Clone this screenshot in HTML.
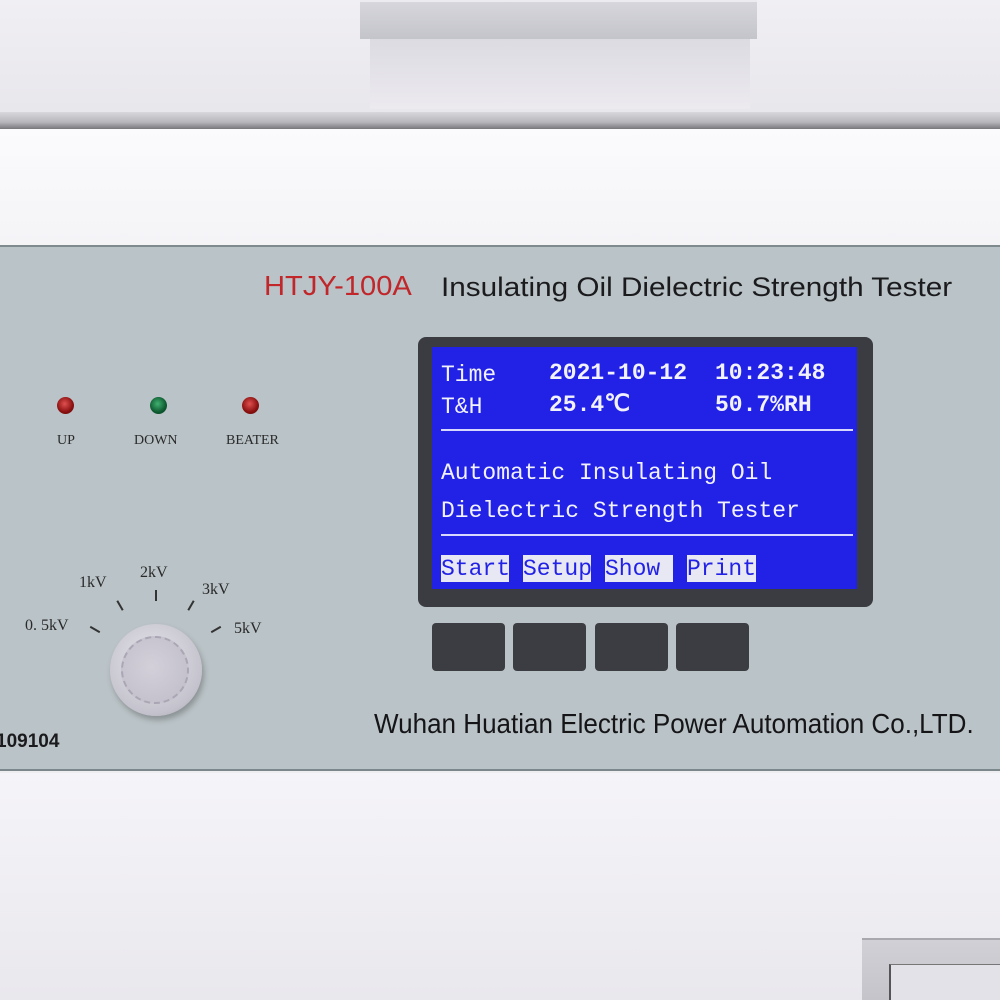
<!DOCTYPE html>
<html><head><meta charset="utf-8"><style>
*{margin:0;padding:0;box-sizing:border-box}
body{width:1000px;height:1000px;overflow:hidden;position:relative;background:#eeeef1;font-family:"Liberation Sans",sans-serif}
.a{position:absolute}
.lcd{font-family:"Liberation Mono",monospace;color:#f2f2ff;font-size:23px;white-space:pre;line-height:1}
.b{font-weight:bold}
.sm{font-family:"Liberation Serif",serif;font-size:14px;color:#2a2a2a}
.btn{position:absolute;top:623px;height:48px;width:73px;background:#3c3d42;border-radius:4px}
.led{position:absolute;width:17px;height:17px;border-radius:50%}
.tick{position:absolute;width:2px;height:11px;background:#333}
</style></head><body>
<div class="a" style="left:0;top:0;width:1000px;height:112px;background:linear-gradient(#f0eff3,#e8e7ec)"></div>
<div class="a" style="left:360px;top:0;width:397px;height:39px;background:linear-gradient(#d6d6dc,#c4c4cb);border-top:2px solid #ececf0"></div>
<div class="a" style="left:370px;top:39px;width:380px;height:70px;background:linear-gradient(#dcdbe2,#eceaef)"></div>
<div class="a" style="left:0;top:112px;width:1000px;height:17px;background:linear-gradient(#d8d8dc,#b6b6bb 60%,#77777c)"></div>
<div class="a" style="left:0;top:129px;width:1000px;height:116px;background:linear-gradient(#fbfbfd,#f4f4f7)"></div>
<div class="a" style="left:0;top:245px;width:1000px;height:526px;background:#bac3c7;border-top:2px solid #7f8a8e;border-bottom:2px solid #7c878b"></div>
<div class="a" style="left:264px;top:270px;font-size:28px;color:#c0262a;transform:scaleX(1.04);transform-origin:left;white-space:nowrap">HTJY-100A</div>
<div class="a" style="left:441px;top:272px;font-size:27px;color:#1b1b1e;transform:scaleX(1.1);transform-origin:left;white-space:nowrap">Insulating Oil Dielectric Strength Tester</div>
<div class="a" style="left:374px;top:708px;font-size:28px;color:#151518;transform:scaleX(.93);transform-origin:left;white-space:nowrap">Wuhan Huatian Electric Power Automation Co.,LTD.</div>
<div class="a" style="left:-4px;top:731px;font-size:19px;font-weight:bold;color:#1b1b1e">109104</div>
<div class="led" style="left:57px;top:397px;background:radial-gradient(circle at 45% 40%,#e05050,#8a1010 60%,#5a0808)"></div>
<div class="led" style="left:150px;top:397px;background:radial-gradient(circle at 45% 40%,#40b070,#0e5a30 60%,#083a20)"></div>
<div class="led" style="left:242px;top:397px;background:radial-gradient(circle at 45% 40%,#e05050,#8a1010 60%,#5a0808)"></div>
<div class="a sm" style="left:57px;top:433px">UP</div>
<div class="a sm" style="left:134px;top:433px">DOWN</div>
<div class="a sm" style="left:226px;top:433px">BEATER</div>
<div class="a sm" style="left:25px;top:617px;font-size:16px">0. 5kV</div>
<div class="a sm" style="left:79px;top:574px;font-size:16px">1kV</div>
<div class="a sm" style="left:140px;top:564px;font-size:16px">2kV</div>
<div class="a sm" style="left:202px;top:581px;font-size:16px">3kV</div>
<div class="a sm" style="left:234px;top:620px;font-size:16px">5kV</div>
<div class="tick" style="left:94px;top:624px;transform:rotate(-60deg)"></div>
<div class="tick" style="left:119px;top:600px;transform:rotate(-30deg)"></div>
<div class="tick" style="left:155px;top:590px"></div>
<div class="tick" style="left:190px;top:600px;transform:rotate(30deg)"></div>
<div class="tick" style="left:215px;top:624px;transform:rotate(60deg)"></div>
<div class="a" style="left:110px;top:624px;width:92px;height:92px;border-radius:50%;background:radial-gradient(circle at 45% 40%,#e6e4ea,#c4c2cc 70%,#9c9aa6);box-shadow:2px 4px 6px rgba(0,0,0,.25)"></div>
<div class="a" style="left:121px;top:636px;width:68px;height:68px;border-radius:50%;background:radial-gradient(circle at 45% 45%,#d3d0da,#bfbcc8);border:2px dashed #aaa6b4"></div>
<div class="a" style="left:418px;top:337px;width:455px;height:270px;background:#3b3c41;border-radius:8px"></div>
<div class="a" style="left:432px;top:347px;width:425px;height:242px;background:#2222e6"></div>
<div class="a lcd" style="left:441px;top:364px">Time</div>
<div class="a lcd b" style="left:549px;top:362px">2021-10-12</div>
<div class="a lcd b" style="left:715px;top:362px">10:23:48</div>
<div class="a lcd" style="left:441px;top:396px">T&amp;H</div>
<div class="a lcd b" style="left:549px;top:394px">25.4℃</div>
<div class="a lcd b" style="left:715px;top:394px">50.7%RH</div>
<div class="a" style="left:441px;top:429px;width:412px;height:2px;background:#d8d8ff"></div>
<div class="a lcd" style="left:441px;top:462px">Automatic Insulating Oil</div>
<div class="a lcd" style="left:441px;top:500px">Dielectric Strength Tester</div>
<div class="a" style="left:441px;top:534px;width:412px;height:2px;background:#d8d8ff"></div>
<div class="a" style="left:441px;top:555px;width:68px;height:27px;background:#e8e8f4"></div>
<div class="a" style="left:523px;top:555px;width:68px;height:27px;background:#e8e8f4"></div>
<div class="a" style="left:605px;top:555px;width:68px;height:27px;background:#e8e8f4"></div>
<div class="a" style="left:687px;top:555px;width:69px;height:27px;background:#e8e8f4"></div>
<div class="a lcd" style="left:441px;top:558px;color:#2222e6">Start</div>
<div class="a lcd" style="left:523px;top:558px;color:#2222e6">Setup</div>
<div class="a lcd" style="left:605px;top:558px;color:#2222e6">Show</div>
<div class="a lcd" style="left:687px;top:558px;color:#2222e6">Print</div>
<div class="btn" style="left:432px"></div>
<div class="btn" style="left:513px"></div>
<div class="btn" style="left:595px"></div>
<div class="btn" style="left:676px"></div>
<div class="a" style="left:0;top:773px;width:1000px;height:227px;background:linear-gradient(#f5f4f8,#e9e8ed)"></div>
<div class="a" style="left:862px;top:938px;width:138px;height:62px;background:linear-gradient(#d0d0d6,#c4c4ca);border-top:2px solid #a8a8ae"></div>
<div class="a" style="left:889px;top:964px;width:111px;height:36px;background:#e2e2e8;border-left:2px solid #555;border-top:1px solid #777"></div>
</body></html>
